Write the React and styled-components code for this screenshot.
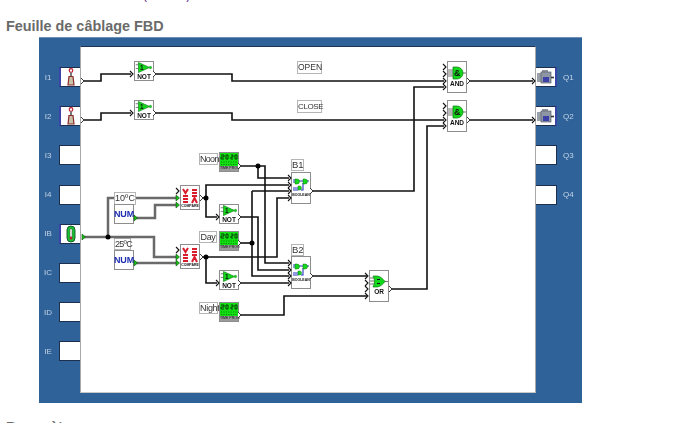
import React from 'react';
import styled, { createGlobalStyle } from 'styled-components';

const Global = createGlobalStyle`
  html, body { margin: 0; padding: 0; background: #fff; }
  body { width: 680px; height: 423px; overflow: hidden; font-family: "Liberation Sans", Arial, sans-serif; }
`;
const Page = styled.div`
  width: 680px; height: 423px; overflow: hidden; position: relative;
`;
const TopLine = styled.div`
  height: 16px; margin-top: -11px; padding-left: 143px;
  font-size: 12px; line-height: 13px; color: #5a1a8a;
`;
const Heading = styled.h2`
  margin: 0; padding: 13px 0 0 6px; height: 20px; box-sizing: content-box;
  font-size: 14.4px; line-height: 16px; font-weight: bold; color: #6a6a6a;
`;
const Panel = styled.div`
  position: relative; margin: -1px 0 0 39px; width: 543px; height: 366px;
  background: #2f6299; border-top: 1px solid #6b8fb8; box-sizing: border-box;
  display: grid; grid-template-columns: 41px 456px 46px; padding-top: 8px; padding-bottom: 10px;
  filter: blur(0.3px);
`;
const Rail = styled.div`
  display: flex; flex-direction: column; padding-top: 21px; gap: 19.2px;
  align-items: ${p => (p.$side === 'left' ? 'flex-end' : 'flex-start')};
`;
const Port = styled.div`
  display: flex; align-items: center; height: 20px; gap: 6px;
  flex-direction: ${p => (p.$side === 'left' ? 'row' : 'row-reverse')};
`;
const PortLabel = styled.span`
  font-size: 8px; color: #c4d4e6; width: 10px; text-align: center;
`;
const Slot = styled.div`
  width: 21px; height: 20px; background: #fff; box-sizing: border-box;
  display: flex; align-items: center; justify-content: center;
  border-style: solid; border-color: #1d2f4e;
  border-width: ${p => (p.$side === 'left' ? '1px 0 1px 1px' : '1px 1px 1px 0')};
  ${p => p.$used && `border-${p.$side}: 2px solid #3d44a8;`}
`;
const Sheet = styled.div`
  position: relative; background: #fff; box-sizing: border-box;
  border-top: 1px solid #1f3552; border-left: 1px solid #a8a8a8;
  border-right: 1px solid #a8a8a8; border-bottom: 1px solid #c8c8c8;
`;
const WireLayer = styled.svg`
  position: absolute; left: 0; top: -1px; width: 543px; height: 366px; pointer-events: none;
`;
const Block = styled.div`
  position: absolute; left: ${p => p.$x - 81}px; top: ${p => p.$y - 48}px;
  width: ${p => p.$w || 20}px; height: ${p => p.$h}px; box-sizing: border-box;
  background: #fff; border: 1px solid #8d8d8d;
  padding-bottom: ${p => p.$pad || 0}px;
  display: flex; flex-direction: column; align-items: center;
  justify-content: ${p => p.$center ? 'center' : 'flex-end'};
`;
const BlockName = styled.span`
  font-size: ${p => p.$size || 6.5}px; line-height: ${p => (p.$size || 6) + 1}px; font-weight: bold; color: #111; white-space: nowrap;
`;
const TextTag = styled.div`
  position: absolute; left: ${p => p.$x - 81}px; top: ${p => p.$y - 48}px;
  width: ${p => p.$w}px; height: ${p => p.$h}px; box-sizing: border-box;
  background: #fff; border: 1px solid #b5b5b5; color: #333;
  font-size: ${p => p.$size || 9}px; line-height: ${p => p.$h - 2}px; text-align: center; white-space: nowrap;
  letter-spacing: ${p => p.$track || 0}px;
`;
const NumText = styled.span`
  font-size: 9px; line-height: 10px; font-weight: bold; color: #1f2fb0; letter-spacing: -0.2px;
`;
const TimerBody = styled.div`
  width: 100%; flex: 1; background: #12e012; overflow: hidden;
`;
const TimerFoot = styled.div`
  width: 100%; height: 5px; flex: none; background: #9a9a9a; color: #111;
  font-size: 3.5px; line-height: 5px; text-align: center; white-space: nowrap;
`;
const Next = styled.div`
  position: absolute; left: 6px; top: 419px; font-size: 14.4px; line-height: 16px; font-weight: bold; color: #6a6a6a;
`;
const IconText = styled.text`
  font-family: "Liberation Sans", Arial, sans-serif; font-weight: bold; fill: #111;
`;

const Switch = () => (
  <svg width="10" height="18" viewBox="0 0 10 18">
    <circle cx="5" cy="2.500" r="1.800" fill="#fff" stroke="#c02030" strokeWidth="1.200" />
    <path d="M5 4.500v4" stroke="#777" strokeWidth="2" />
    <path d="M3 8.500h4l1 8.500H2z" fill="#c9c2a8" stroke="#8c2b2b" strokeWidth="1.200" />
  </svg>
);
const Thermo = () => (
  <svg width="10" height="18" viewBox="0 0 10 18">
    <rect x="1" y="1" width="8" height="16" rx="4" fill="#18c030" stroke="#186030" />
    <rect x="4" y="4" width="2" height="8" fill="#fff" stroke="#555" strokeWidth=".5" />
    <circle cx="5" cy="13" r="1.500" fill="#c02030" />
  </svg>
);
const Motor = () => (
  <svg width="18" height="14" viewBox="0 0 18 14">
    <rect x="5" y="0" width="6" height="3" fill="#8e939e" />
    <rect x="0" y="3" width="4" height="9" fill="#9aa0a8" />
    <rect x="4" y="2" width="10" height="11" fill="#8d96a2" stroke="#59626e" strokeWidth=".7" />
    <rect x="6" y="7" width="6" height="5" fill="#3a40a8" />
    <path d="M14 7.500h3" stroke="#333" strokeWidth="1.600" />
  </svg>
);
const NotGate = () => (
  <svg width="18" height="12" viewBox="0 0 18 12">
    <path d="M0 3h3M0 7h3" stroke="#333" strokeWidth=".7" />
    <path d="M3 0.500L15 6 3 11.500z" fill="#14d81c" stroke="#0a7a10" strokeWidth=".7" />
    <circle cx="16" cy="6" r="1.300" fill="#14d81c" stroke="#0a7a10" strokeWidth=".5" />
    <IconText x="4.500" y="8.500" fontSize="7">1</IconText>
  </svg>
);
const AndGate = () => (
  <svg width="18" height="14" viewBox="0 0 18 14">
    <path d="M0 4h5M0 6h5M0 8h5M0 10h5M14 7h4" stroke="#333" strokeWidth=".7" />
    <path d="M5 1h4a6 6 0 0 1 0 12H5z" fill="#14d81c" stroke="#0a7a10" strokeWidth=".7" />
    <IconText x="6" y="10" fontSize="9">&amp;</IconText>
  </svg>
);
const OrGate = () => (
  <svg width="18" height="13" viewBox="0 0 18 13">
    <path d="M0 3h5M0 6h6M0 9h5M14 6.500h4" stroke="#333" strokeWidth=".7" />
    <path d="M3 1h4c3 0 6 3 8 5.500C13 9 10 12 7 12H3c2-3 2-8 0-11z" fill="#14d81c" stroke="#0a7a10" strokeWidth=".7" />
    <path d="M7 4.500h3M7 8.500h3" stroke="#111" strokeWidth="1" />
  </svg>
);
const Compare = () => (
  <svg width="18" height="16" viewBox="0 0 18 16">
    <g fill="none" stroke="#d81c2c" strokeWidth="2">
      <path d="M2 1l2.500 4 2.500-4M2 8h5M2 11h5M2 14h5" />
      <path d="M11 2h5M11 5h5M11 8h5M11 15l2.500-5 2.500 5" />
    </g>
  </svg>
);
const BooleanGates = () => (
  <svg width="16" height="17" viewBox="0 0 16 17">
    <path d="M0 4h3M0 6h3M0 12h5M0 14h5M6 5h5M10 7v7H8M14 5h2" fill="none" stroke="#2436c0" strokeWidth="1.100" />
    <path d="M2 3h2a2.500 2.500 0 0 1 0 5H2z" fill="#14d81c" stroke="#0a7a10" strokeWidth=".5" />
    <path d="M10 3h2a2.500 2.500 0 0 1 0 5h-2z" fill="#14d81c" stroke="#0a7a10" strokeWidth=".5" />
    <path d="M5 10h1.500a2 2 0 0 1 0 4H5z" fill="#14d81c" stroke="#0a7a10" strokeWidth=".5" />
  </svg>
);
const TimerDigits = () => (
  <svg width="18" height="13" viewBox="0 0 18 13">
    <path d="M1 1h3v2H1v2h3M6 1h2v4H6zM11 1h2v2h-2v2h2M15 1h2v4h-2z" fill="none" stroke="#0a3a0a" strokeWidth="1" />
    <path d="M1 8h16M1 10.500h16" stroke="#0a8a0a" strokeWidth="1.200" strokeDasharray="1.200 1.200" />
  </svg>
);

const P = (x, y) => `${x - 39} ${y - 38}`;
const path = pts => 'M' + pts.map(([x, y]) => P(x, y)).join('L');

const digital = [
  [[82,82],[101,82],[101,75],[131,75]],
  [[155,75],[232,75],[232,82],[444,82]],
  [[82,121],[101,121],[101,114],[131,114]],
  [[155,114],[232,114],[232,121],[444,121]],
  [[469,82],[533,82]],
  [[469,121],[533,121]],
  [[240,167],[265,167],[265,264],[289,264]],
  [[258,167],[258,179],[289,179]],
  [[202,199],[206,199],[206,186],[289,186]],
  [[206,199],[206,218],[217,218]],
  [[240,218],[258,218],[258,271],[289,271]],
  [[240,244],[252,244]],
  [[252,192],[252,277],[289,277]],
  [[252,192],[289,192]],
  [[202,258],[277,258],[277,199],[289,199]],
  [[206,258],[206,284],[217,284]],
  [[240,284],[289,284]],
  [[312,192],[414,192],[414,88],[444,88]],
  [[312,277],[367,277]],
  [[391,290],[427,290],[427,127],[444,127]],
  [[240,316],[284,316],[284,297],[367,297]],
];
const analog = [
  [[84,238],[154,238],[154,258],[176,258]],
  [[108,238],[108,199],[114,199]],
  [[136,199],[176,199]],
  [[136,219],[155,219],[155,206],[176,206]],
  [[136,264],[176,264]],
];
const junctions = [[108,238],[206,199],[206,258],[258,167],[252,244]];
const inputChevrons = [
  [131,75],[131,114],
  [217,218],[217,284],
  [444,68],[444,75],[444,82],[444,88],[444,107],[444,114],[444,121],[444,127],
  [289,179],[289,186],[289,192],[289,199],[289,264],[289,271],[289,277],[289,284],
  [366,277],[366,284],[366,290],[366,297],
  [533,82],[533,121],
  [177,192],[177,251],
];
const outputChevrons = [
  [82,82],[82,121],[154,75],[154,114],[468,82],[468,121],[239,167],[239,218],[239,244],[239,284],[239,316],
  [311,192],[311,277],[390,290],[201,199],[201,258],
];
const greenPorts = [[83,238],[135,219],[135,264],[177,199],[177,206],[177,258],[177,264]];

const inputs = [
  { n: 'I1', icon: <Switch /> }, { n: 'I2', icon: <Switch /> }, { n: 'I3' }, { n: 'I4' },
  { n: 'IB', icon: <Thermo /> }, { n: 'IC' }, { n: 'ID' }, { n: 'IE' },
];
const outputs = [{ n: 'Q1', icon: <Motor /> }, { n: 'Q2', icon: <Motor /> }, { n: 'Q3' }, { n: 'Q4' }];

const Timer = ({ x, y }) => (
  <Block $x={x} $y={y} $h={20}>
    <TimerBody><TimerDigits /></TimerBody>
    <TimerFoot>TIME PROG</TimerFoot>
  </Block>
);
const Gate = ({ x, y, h, pad, name, size, children }) => (
  <Block $x={x} $y={y} $h={h} $pad={pad}>{children}<BlockName $size={size}>{name}</BlockName></Block>
);

export default function App() {
  return (
    <Page>
      <Global />
      <TopLine>(annexe)</TopLine>
      <Heading>Feuille de câblage FBD</Heading>
      <Panel>
        <Rail $side="left">
          {inputs.map(p => (
            <Port key={p.n} $side="left">
              <PortLabel>{p.n}</PortLabel>
              <Slot $side="left" $used={!!p.icon}>{p.icon}</Slot>
            </Port>
          ))}
        </Rail>
        <Sheet>
          <TextTag $x={297} $y={62} $w={25} $h={13} $size={8.5}>OPEN</TextTag>
          <TextTag $x={297} $y={101} $w={25} $h={13} $size={8} $track={-0.4}>CLOSE</TextTag>
          <Gate x={134} y={62} h={20} name="NOT"><NotGate /></Gate>
          <Gate x={134} y={101} h={20} name="NOT"><NotGate /></Gate>
          <Gate x={447} y={62} h={32} pad={5} name="AND" size={6.5}><AndGate /></Gate>
          <Gate x={447} y={101} h={32} pad={5} name="AND" size={6.5}><AndGate /></Gate>
          <TextTag $x={199} $y={154} $w={19} $h={12} $track={-0.7}>Noon</TextTag>
          <Timer x={219} y={153} />
          <TextTag $x={199} $y={232} $w={18} $h={12} $track={-0.3}>Day</TextTag>
          <Timer x={219} y={232} />
          <TextTag $x={199} $y={303} $w={19} $h={12} $track={-0.3}>Night</TextTag>
          <Timer x={219} y={303} />
          <TextTag $x={114} $y={193} $w={22} $h={13}>10ºC</TextTag>
          <Block $x={114} $y={205} $h={20} $center><NumText>NUM</NumText></Block>
          <TextTag $x={114} $y={239} $w={17} $h={12} $track={-0.7}>25ºC</TextTag>
          <Block $x={114} $y={251} $h={20} $center><NumText>NUM</NumText></Block>
          <Gate x={180} y={186} h={25} pad={1} name="COMPARE" size={3.5}><Compare /></Gate>
          <Gate x={180} y={245} h={25} pad={1} name="COMPARE" size={3.5}><Compare /></Gate>
          <Gate x={219} y={205} h={20} name="NOT"><NotGate /></Gate>
          <Gate x={219} y={271} h={20} name="NOT"><NotGate /></Gate>
          <TextTag $x={291} $y={160} $w={13} $h={12} $size={9.5}>B1</TextTag>
          <Gate x={291} y={173} h={32} pad={6} name="BOOLEAN" size={3.5}><BooleanGates /></Gate>
          <TextTag $x={291} $y={245} $w={13} $h={12} $size={9.5}>B2</TextTag>
          <Gate x={291} y={257} h={33} pad={6} name="BOOLEAN" size={3.5}><BooleanGates /></Gate>
          <Gate x={369} y={271} h={32} pad={6} name="OR" size={6.5}><OrGate /></Gate>
        </Sheet>
        <Rail $side="right">
          {outputs.map(p => (
            <Port key={p.n} $side="right">
              <PortLabel>{p.n}</PortLabel>
              <Slot $side="right" $used={!!p.icon}>{p.icon}</Slot>
            </Port>
          ))}
        </Rail>
        <WireLayer viewBox="0 0 543 366">
          <g fill="none" stroke="#6a6a6a" strokeWidth="2.500">
            {analog.map((w, i) => <path key={i} d={path(w)} />)}
          </g>
          <g fill="none" stroke="#111" strokeWidth="1.600">
            {digital.map((w, i) => <path key={i} d={path(w)} />)}
          </g>
          <g fill="none" stroke="#111" strokeWidth="1.100">
            {inputChevrons.map(([x, y], i) => (
              <path key={i} d={`M${x - 39 - 1} ${y - 38 - 3}l3 3-3 3`} />
            ))}
          </g>
          <g fill="#fff" stroke="#222" strokeWidth=".9">
            {outputChevrons.map(([x, y], i) => (
              <path key={i} d={`M${x - 39 - 1} ${y - 38 - 3}l3 3-3 3`} />
            ))}
          </g>
          <g fill="#16c016" stroke="#0b4a0b" strokeWidth=".6">
            {greenPorts.map(([x, y], i) => (
              <path key={i} d={`M${x - 39 - 1} ${y - 38 - 3}l3.500 3-3.500 3z`} />
            ))}
          </g>
          <g fill="#000">
            {junctions.map(([x, y], i) => <circle key={i} cx={x - 39} cy={y - 38} r="2.500" />)}
          </g>
        </WireLayer>
      </Panel>
      <Next>Paramètres</Next>
    </Page>
  );
}
